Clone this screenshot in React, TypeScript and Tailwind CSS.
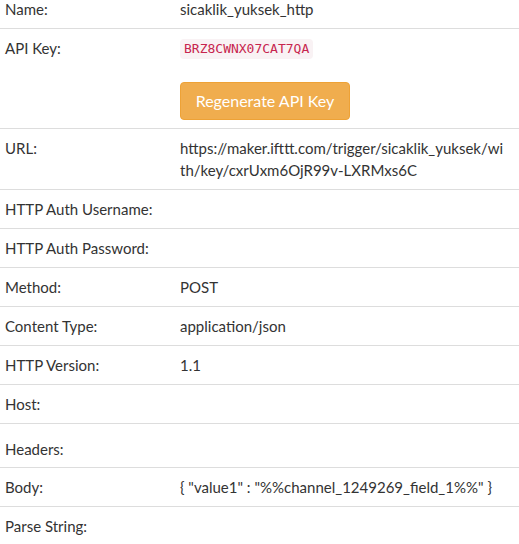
import React from 'react';

const rows: { label: string; value?: string }[] = [
  { label: 'URL:', value: 'https://maker.ifttt.com/trigger/sicaklik_yuksek/with/key/cxrUxm6OjR99v-LXRMxs6C' },
  { label: 'HTTP Auth Username:' },
  { label: 'HTTP Auth Password:' },
  { label: 'Method:', value: 'POST' },
  { label: 'Content Type:', value: 'application/json' },
  { label: 'HTTP Version:', value: '1.1' },
  { label: 'Host:' },
];

function Row({ label, children, className = '' }: { label: string; children?: React.ReactNode; className?: string }) {
  return (
    <div className={'flex border-b border-[#dddddd] ' + className}>
      <div className="w-[180px] shrink-0 pl-[5px] py-2">{label}</div>
      <div className="flex-1 min-w-0 py-2 pr-3 break-all">{children}</div>
    </div>
  );
}

export default function App() {
  return (
    <div
      className="w-[519px] h-[544px] overflow-hidden bg-white text-[#333333] text-[15px] leading-[22px]"
      style={{ fontFamily: 'Lato, "Open Sans", sans-serif' }}
    >
      <div className="-mt-[10px]">
        <Row label="Name:">sicaklik_yuksek_http</Row>

        <div className="flex border-b border-[#dddddd]">
          <div className="w-[180px] shrink-0 pl-[5px] py-2">API Key:</div>
          <div className="flex-1 py-2">
            <div className="h-[22px] flex items-end">
              <code
                className="px-1 h-[20px] leading-[20px] rounded bg-[#f9f2f4] text-[#c7254e] text-[13px]"
                style={{ fontFamily: '"DejaVu Sans Mono", monospace' }}
              >
                BRZ8CWNX07CAT7QA
              </code>
            </div>
            <button className="mt-[23px] h-[38px] w-[170px] rounded-[4px] bg-[#f0ad4e] border border-[#eea236] text-white text-[16px]">
              Regenerate API Key
            </button>
          </div>
        </div>

        {rows.map((r) => (
          <Row key={r.label} label={r.label}>
            {r.value}
          </Row>
        ))}

        <div className="flex border-b border-[#dddddd] h-[44px]">
          <div className="w-[180px] shrink-0 pl-[5px] pt-[14px]">Headers:</div>
          <div className="flex-1" />
        </div>

        <Row label="Body:">{'{ "value1" : "%%channel_1249269_field_1%%" }'}</Row>
        <Row label="Parse String:" className="border-b-0" />
      </div>
    </div>
  );
}
